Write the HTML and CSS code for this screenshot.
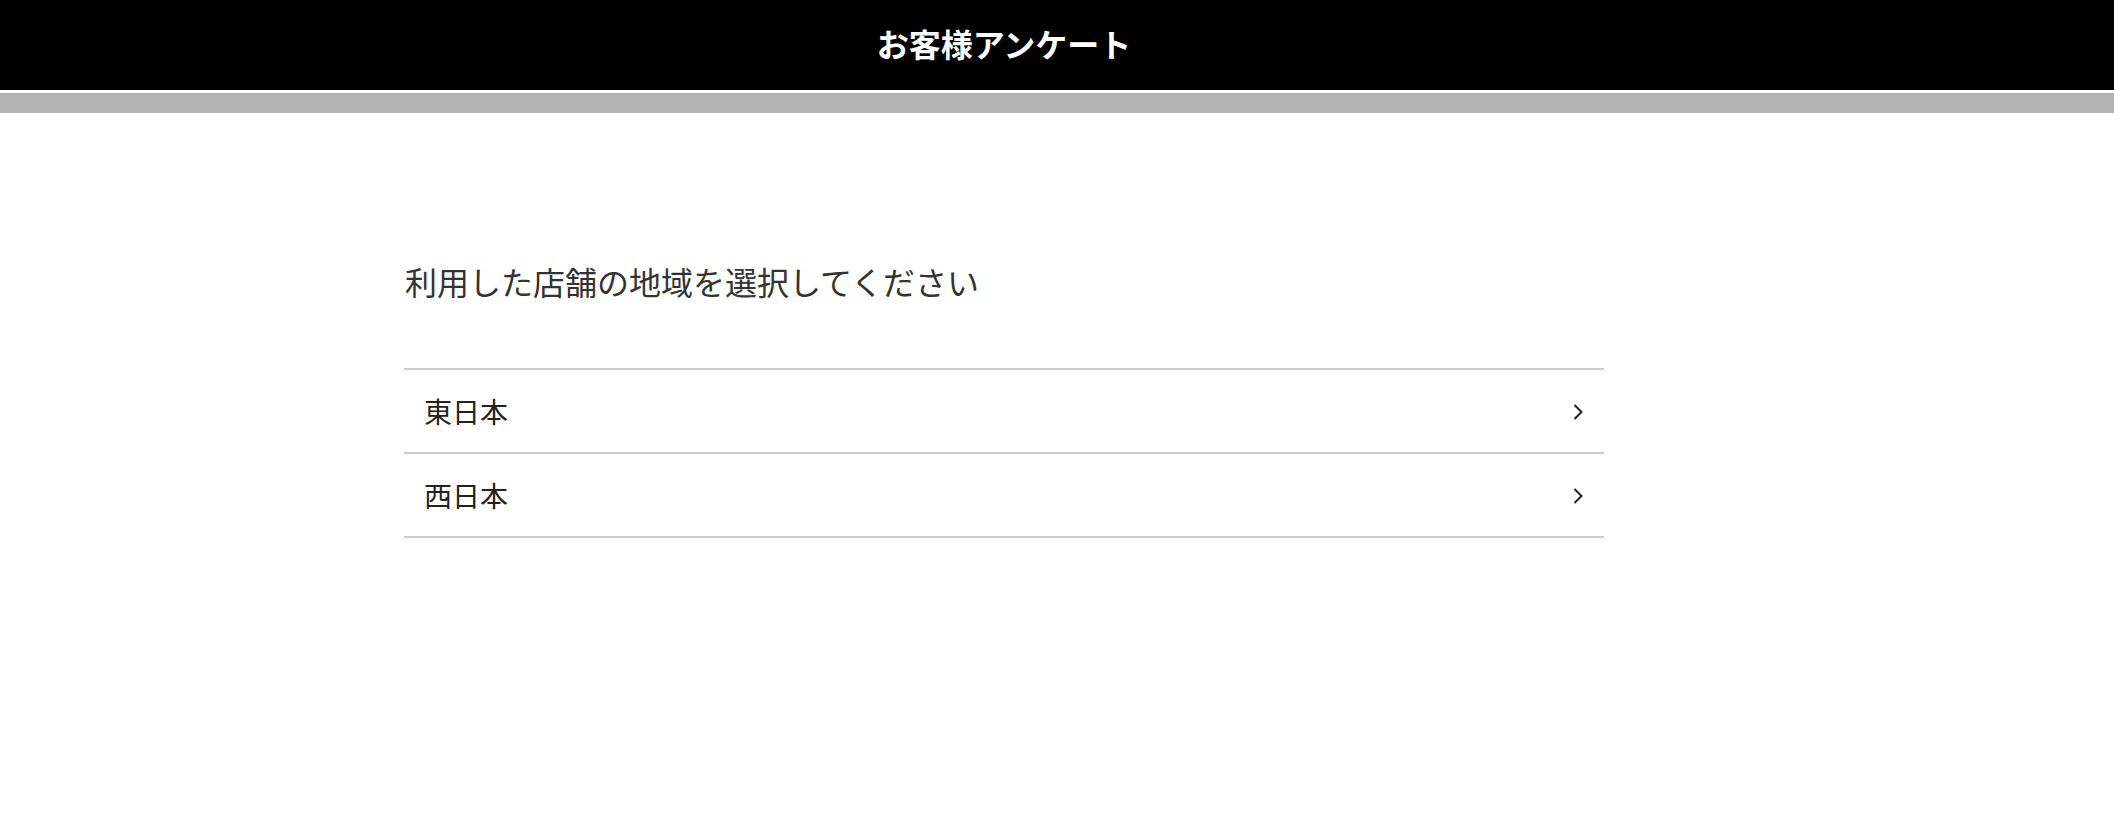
FILE: index.html
```html
<!DOCTYPE html>
<html lang="ja">
<head>
  <meta charset="UTF-8">
  <meta name="viewport" content="width=device-width, initial-scale=1.0">
  <title>お客様アンケート</title>
  <link rel="stylesheet" href="styles.css">
</head>
<body>
  <header class="header">
    <div class="wrap">
      <h1 class="title">お客様アンケート</h1>
    </div>
  </header>
  <div class="subbar"></div>

  <main class="wrap">
    <div class="content">
      <p class="question">利用した店舗の地域を選択してください</p>
      <ul class="choices">
        <li class="choice">
          <span>東日本</span>
          <svg class="chevron" viewBox="0 0 10 16" width="10" height="16"><path d="M1.5 1 L8.5 8 L1.5 15" fill="none" stroke="#222" stroke-width="2"/></svg>
        </li>
        <li class="choice">
          <span>西日本</span>
          <svg class="chevron" viewBox="0 0 10 16" width="10" height="16"><path d="M1.5 1 L8.5 8 L1.5 15" fill="none" stroke="#222" stroke-width="2"/></svg>
        </li>
      </ul>
    </div>
  </main>
</body>
</html>
```

FILE: styles.css
```css
* {
  margin: 0;
  padding: 0;
  box-sizing: border-box;
}

body {
  font-family: "Noto Sans CJK JP", "Noto Sans", sans-serif;
  background: #fff;
  color: #333;
}

.wrap {
  width: 2008px;
}

.header {
  background: #000;
  height: 93px;
  border-bottom: 3px solid #fff;
}

.title {
  color: #fff;
  font-size: 32px;
  font-weight: 700;
  line-height: 86px;
  text-align: center;
}

.subbar {
  height: 20px;
  background: #b3b3b3;
}

.content {
  width: 1200px;
  margin: 0 auto;
  padding-top: 144px;
}

.question {
  font-size: 32px;
  line-height: 48px;
  color: #333;
  margin-left: 1px;
}

.choices {
  list-style: none;
  margin-top: 63px;
  border-top: 2px solid #ccc;
}

.choice {
  display: flex;
  justify-content: space-between;
  align-items: center;
  height: 84px;
  padding: 0 20px;
  border-bottom: 2px solid #ccc;
  font-size: 28px;
  color: #222;
  cursor: pointer;
}

.chevron {
  margin-right: 1px;
  margin-top: 2px;
}
```
